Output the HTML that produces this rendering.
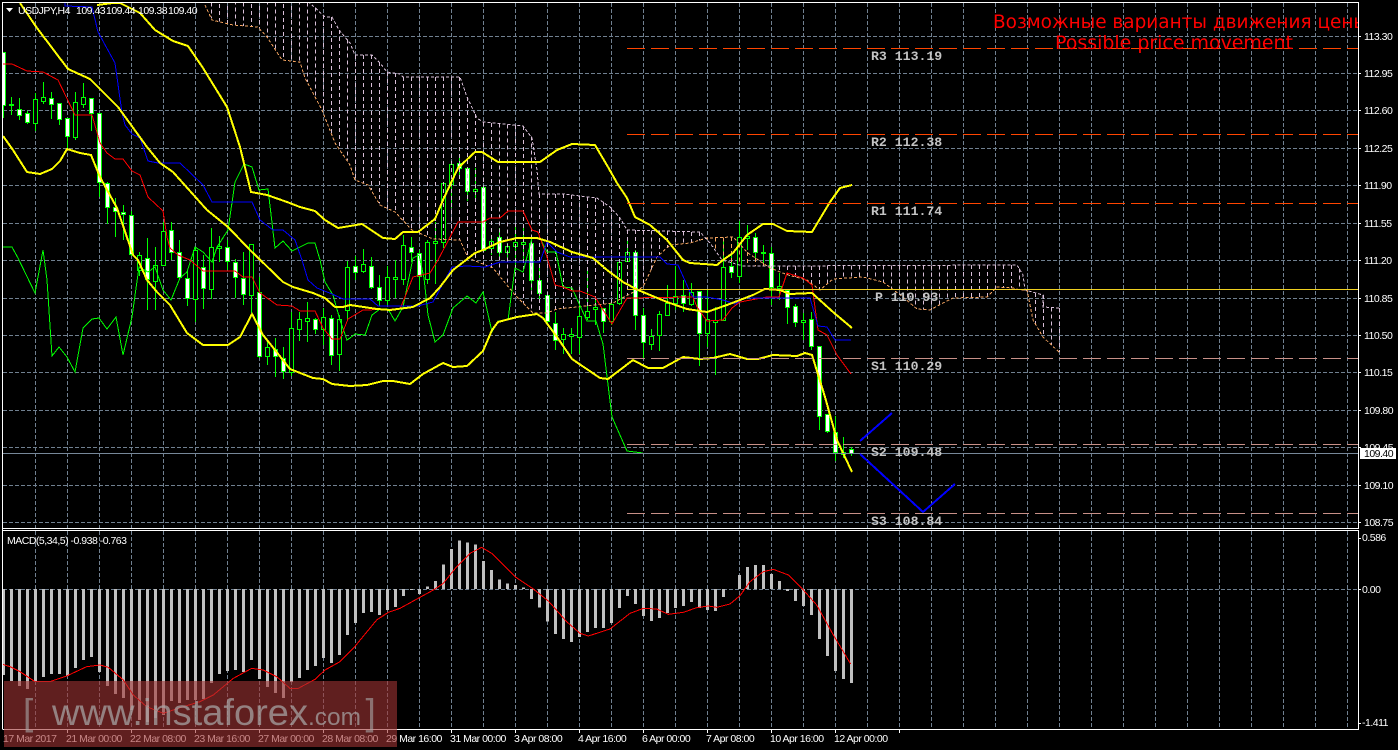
<!DOCTYPE html>
<html><head><meta charset="utf-8"><title>USDJPY,H4</title>
<style>
html,body{margin:0;padding:0;background:#000;width:1398px;height:750px;overflow:hidden}
svg{display:block;position:absolute;left:0;top:0}
text{font-family:"Liberation Sans",sans-serif;fill:#fff;font-size:10.5px;letter-spacing:-.5px}
.m{font-family:"Liberation Mono",monospace;font-size:13.2px;font-weight:bold;fill:#c4c4c4;letter-spacing:0}
.t{font-family:"DejaVu Sans",sans-serif;font-size:19px;fill:#f00;letter-spacing:0}
.l{fill:none;shape-rendering:crispEdges}
</style></head><body>
<svg id="s" width="1398" height="750" viewBox="0 0 1398 750" xmlns="http://www.w3.org/2000/svg">
<defs>
<clipPath id="c1"><rect x="3" y="3" width="1355" height="525"/></clipPath>
<clipPath id="c2"><rect x="3" y="531" width="1355" height="198"/></clipPath>
</defs>
<rect width="1398" height="750" fill="#000"/>
<g id="grid" shape-rendering="crispEdges"></g>
<g clip-path="url(#c1)" id="main"></g>
<g clip-path="url(#c2)" id="macd"></g>
<g id="frame" shape-rendering="crispEdges">
<path d="M2.5 729V2.5H1358.5V528.5H2.5M2.5 530.5H1358.5V729.5H2.5" fill="none" stroke="#fff"/>
</g>
<path d="M6 8h7l-3.5 4z" fill="#fff"/>
<text x="18" y="14">USDJPY,H4</text>
<text x="76" y="14">109.43</text><text x="106" y="14">109.44</text><text x="138" y="14">109.38</text><text x="168" y="14">109.40</text>
<text x="7" y="544">MACD(5,34,5) -0.938 -0.763</text>

<g class="m-labels">
<text class="m" x="871" y="60">R3 113.19</text>
<text class="m" x="871" y="146">R2 112.38</text>
<text class="m" x="871" y="215">R1 111.74</text>
<text class="m" x="875" y="301">P 110.93</text>
<text class="m" x="871" y="370">S1 110.29</text>
<text class="m" x="871" y="456">S2 109.48</text>
<text class="m" x="871" y="525">S3 108.84</text>
</g>

<svg x="0" y="0" width="1358" height="60" overflow="hidden">
<text class="t" x="993" y="28" textLength="375" lengthAdjust="spacingAndGlyphs">Возможные варианты движения цены</text>
<text class="t" x="1055" y="49" textLength="238" lengthAdjust="spacingAndGlyphs">Possible price movement</text>
</svg>

<g>
<text x="1364" y="40">113.30</text><text x="1364" y="77">112.95</text><text x="1364" y="114">112.60</text>
<text x="1364" y="152">112.25</text><text x="1364" y="189">111.90</text><text x="1364" y="227">111.55</text>
<text x="1364" y="264">111.20</text><text x="1364" y="302">110.85</text><text x="1364" y="339">110.50</text>
<text x="1364" y="376">110.15</text><text x="1364" y="414">109.80</text><text x="1364" y="451">109.45</text>
<text x="1364" y="489">109.10</text><text x="1364" y="526">108.75</text>
<rect x="1360" y="448" width="36" height="11" fill="#fff"/>
<text x="1364" y="457" style="fill:#000">109.40</text>
<text x="1362" y="541">0.586</text><text x="1362" y="593">0.00</text><text x="1362" y="726">-1.411</text>
</g>

<g>
<text x="3" y="742">17 Mar 2017</text><text x="66" y="742">21 Mar 00:00</text><text x="130" y="742">22 Mar 08:00</text>
<text x="194" y="742">23 Mar 16:00</text><text x="258" y="742">27 Mar 00:00</text><text x="322" y="742">28 Mar 08:00</text>
<text x="386" y="742">29 Mar 16:00</text><text x="450" y="742">31 Mar 00:00</text><text x="514" y="742">3 Apr 08:00</text>
<text x="578" y="742">4 Apr 16:00</text><text x="642" y="742">6 Apr 00:00</text><text x="706" y="742">7 Apr 08:00</text>
<text x="770" y="742">10 Apr 16:00</text><text x="834" y="742">12 Apr 00:00</text>
</g>

<rect x="4" y="681" width="393" height="66" fill="#a03434" fill-opacity=".6"/>
<g>
<text x="23" y="725" style="font-size:37px;fill:#a8a8a8;letter-spacing:0" fill-opacity=".6">[</text>
<text x="52" y="725" textLength="256" lengthAdjust="spacingAndGlyphs" style="font-size:37px;fill:#a8a8a8;letter-spacing:0" fill-opacity=".72">www.instaforex</text>
<text x="308" y="725" textLength="53" lengthAdjust="spacingAndGlyphs" style="font-size:24px;fill:#a8a8a8;letter-spacing:0" fill-opacity=".72">.com</text>
<text x="365.5" y="725" style="font-size:37px;fill:#a8a8a8;letter-spacing:0" fill-opacity=".6">]</text>
</g>
</svg>
<script>
(function(){
var NS="http://www.w3.org/2000/svg";
function el(p,n,a){var e=document.createElementNS(NS,n);for(var k in a)e.setAttribute(k,a[k]);p.appendChild(e);return e;}
var G=document.getElementById("grid"),M=document.getElementById("main"),D=document.getElementById("macd"),F=document.getElementById("frame");
var i,x,gc="#708090";
var hs=[36,73,110,148,185,223,260,298,335,372,410,447,485,522];
hs.forEach(function(y){
 el(G,"line",{x1:3,x2:1358,y1:y+.5,y2:y+.5,stroke:gc,"stroke-dasharray":"4 2"});
 el(F,"line",{x1:1358,x2:1361,y1:y+.5,y2:y+.5,stroke:"#fff"});
});
for(x=35;x<1358;x+=32){
 el(G,"line",{x1:x+.5,x2:x+.5,y1:3,y2:528,stroke:gc,"stroke-dasharray":"4 2"});
 el(G,"line",{x1:x+.5,x2:x+.5,y1:531,y2:729,stroke:gc,"stroke-dasharray":"4 2"});
}
for(x=67;x<900;x+=64){el(F,"line",{x1:x+.5,x2:x+.5,y1:729,y2:733,stroke:"#fff"});}
el(G,"line",{x1:3,x2:1358,y1:589.5,y2:589.5,stroke:gc,"stroke-dasharray":"4 2"});
[[538],[589],[723]].forEach(function(a){el(F,"line",{x1:1358,x2:1361,y1:a[0]+.5,y2:a[0]+.5,stroke:"#fff"});});

/* candles: hi, top, bottom, lo, white */
var C=[[52,52,105,118,1],[97,104,105,115,0],[98,109,115,120,1],[111,113,122,124,1],[93,99,123,131,0],[82,97,101,104,0],[92,98,104,119,1],[103,103,119,125,1],[118,118,136,148,1],[92,102,137,140,0],[83,97,104,108,0],[98,98,113,131,1],[113,113,182,197,1],[182,183,207,224,1],[198,207,211,237,1],[205,212,214,240,1],[211,215,254,256,1],[252,255,270,276,0],[238,258,279,310,1],[247,265,281,310,0],[222,231,265,266,0],[222,230,252,260,1],[240,252,277,279,1],[270,278,298,306,1],[248,250,299,322,0],[255,267,288,309,1],[228,247,289,299,0],[236,246,248,262,0],[240,247,261,270,1],[259,262,277,298,1],[252,278,294,305,1],[244,244,295,313,0],[277,292,356,358,1],[340,347,356,365,0],[338,349,356,377,1],[347,358,371,379,1],[312,328,372,376,0],[312,319,329,341,0],[302,318,321,342,0],[318,319,329,334,1],[308,317,329,345,0],[315,318,355,365,1],[315,319,354,371,0],[261,267,310,320,0],[256,266,272,280,1],[249,264,271,273,0],[257,266,287,289,1],[275,287,300,306,1],[266,277,300,305,0],[260,277,279,298,0],[235,245,279,285,0],[237,247,252,262,1],[250,253,276,290,1],[240,242,279,284,0],[222,241,243,284,0],[183,183,242,248,0],[164,164,184,208,0],[156,163,168,175,1],[168,168,191,201,1],[168,189,191,201,0],[185,187,250,252,1],[236,241,248,255,0],[228,237,252,258,1],[243,246,252,262,0],[224,242,246,268,0],[228,242,244,262,0],[239,243,280,290,1],[268,280,293,300,1],[295,295,321,325,1],[312,323,340,350,1],[328,334,339,354,0],[328,334,336,354,0],[302,316,337,354,0],[268,311,317,320,0],[298,307,309,325,0],[308,308,321,333,1],[300,304,321,325,0],[260,262,303,305,0],[240,252,261,262,0],[250,252,315,330,1],[308,315,342,358,1],[329,336,344,350,0],[311,314,335,351,0],[285,303,315,316,0],[266,296,303,310,0],[280,295,303,312,1],[283,292,304,306,0],[291,291,333,366,1],[290,319,333,347,0],[307,320,322,375,0],[240,267,320,321,0],[255,266,272,278,1],[221,237,276,283,0],[225,236,238,250,0],[233,237,252,258,1],[245,252,253,263,0],[247,253,287,305,1],[273,286,288,300,0],[290,290,307,324,1],[304,306,322,327,1],[313,320,322,340,0],[312,319,346,350,1],[346,346,416,430,1],[414,414,431,433,1],[416,432,452,461,1],[437,452,454,458,1],[447,449,453,456,1]];
var cg=el(M,"g",{"shape-rendering":"crispEdges"});
C.forEach(function(c,k){
 var cx=3+8*k;
 el(cg,"line",{x1:cx+.5,x2:cx+.5,y1:c[0],y2:c[3],stroke:"#00ff00"});
 el(cg,"rect",{x:cx-1.5,y:c[1]+.5,width:4,height:Math.max(c[2]-c[1],1),fill:c[4]?"#fff":"#000",stroke:"#00ff00"});
});

function yAt(p,x){
 if(x<=p[0][0])return p[0][1];
 for(var i=1;i<p.length;i++){if(x<=p[i][0]){var a=p[i-1],b=p[i];return a[1]+(b[1]-a[1])*(x-a[0])/(b[0]-a[0]);}}
 return p[p.length-1][1];
}
var orange=[[205,5],[212,20],[233,25],[258,27],[267,37],[282,60],[300,62],[305,78],[322,110],[335,143],[350,165],[355,180],[368,185],[380,205],[395,212],[412,230],[433,239],[460,240],[468,258],[493,268],[515,295],[533,313],[547,313],[557,309],[577,307],[613,303],[643,287],[657,257],[670,245],[690,243],[707,238],[733,237],[748,253],[770,268],[788,275],[807,280],[820,290],[833,279],[863,277],[883,282],[903,297],[917,309],[930,310],[943,303],[953,298],[987,297],[997,287],[1013,288],[1020,290],[1027,290],[1033,320],[1043,337],[1059,352]];
var thistle=[[205,-20],[310,3],[325,17],[332,17],[339,30],[350,43],[355,55],[372,55],[380,63],[387,72],[400,74],[403,77],[460,77],[467,97],[477,118],[483,122],[523,126],[532,138],[537,170],[539,194],[563,194],[597,198],[610,207],[620,218],[627,230],[700,232],[710,243],[722,260],[743,266],[763,266],[1017,265],[1023,275],[1025,290],[1043,295],[1043,307],[1059,308]];
function pl(p,o){o=o||{};o.points=p.map(function(a){return a.join(",")}).join(" ");o["class"]="l";return el(M,"polyline",o);}
var hg=el(M,"g",{"shape-rendering":"crispEdges"});
for(x=211;x<=1059;x+=8){
 var a=yAt(orange,x),b=yAt(thistle,x);
 el(hg,"line",{x1:x+.5,x2:x+.5,y1:Math.min(a,b),y2:Math.max(a,b),stroke:a<b?"#f4a460":"#d8bfd8","stroke-dasharray":"4 3"});
}
pl(orange,{stroke:"#f4a460","stroke-dasharray":"3 2"});
pl(thistle,{stroke:"#d8bfd8","stroke-dasharray":"3 2"});

/* chikou */
pl([[3,247],[12,247],[18,258],[35,293],[43,250],[47,280],[52,356],[59,347],[67,357],[75,372],[83,328],[92,319],[99,318],[107,329],[116,317],[123,355],[132,317],[139,267],[148,272],[155,267],[163,290],[171,300],[180,278],[187,272],[195,247],[203,252],[212,262],[217,247],[228,230],[235,182],[244,164],[252,167],[259,190],[268,189],[275,248],[283,241],[292,251],[308,243],[315,243],[320,260],[325,282],[333,295],[340,320],[347,340],[350,338],[355,334],[365,335],[372,315],[380,309],[388,309],[395,321],[403,307],[413,258],[419,255],[424,278],[428,315],[435,342],[443,335],[453,308],[467,296],[476,303],[483,292],[492,332],[498,321],[508,320],[515,268],[523,272],[532,238],[540,238],[547,252],[556,252],[563,287],[572,288],[587,321],[596,321],[603,344],[612,417],[627,451],[643,453]],{stroke:"#00ff00"});
/* tenkan */
pl([[3,64],[12,64],[27,71],[43,72],[58,80],[75,115],[92,115],[100,143],[107,153],[115,159],[123,159],[132,171],[140,175],[148,197],[163,211],[167,237],[170,248],[178,255],[190,260],[203,271],[235,271],[243,277],[252,277],[260,293],[277,305],[292,306],[300,311],[315,311],[323,328],[332,339],[340,339],[348,319],[363,310],[400,309],[407,292],[413,277],[430,273],[438,260],[458,222],[483,222],[490,218],[500,218],[508,211],[523,211],[532,230],[538,232],[547,257],[555,285],[563,287],[572,291],[580,291],[595,297],[612,324],[627,298],[693,297],[697,307],[707,321],[723,320],[732,308],[740,302],[767,297],[779,297],[787,273],[803,278],[812,285],[818,330],[827,335],[837,355],[851,374]],{stroke:"#ff0000"});
/* kijun */
pl([[65,3],[65,6],[92,7],[98,32],[115,63],[122,113],[125,125],[132,134],[140,138],[148,161],[158,163],[180,163],[203,185],[212,202],[252,202],[260,220],[273,230],[283,230],[295,240],[302,260],[308,280],[317,288],[332,294],[343,299],[370,299],[378,306],[418,306],[433,302],[452,267],[467,266],[485,267],[500,262],[540,262],[547,242],[557,252],[570,257],[660,257],[667,264],[678,265],[690,292],[693,297],[707,297],[723,300],[735,304],[745,298],[810,298],[818,326],[827,327],[835,340],[851,340]],{stroke:"#0000ff"});
/* yellow bands */
var Y=[
[[97,5],[113,3],[120,3],[140,13],[155,30],[173,41],[188,46],[203,68],[227,107],[240,147],[251,192],[267,195],[287,202],[300,207],[315,211],[325,220],[338,228],[350,226],[362,224],[383,238],[395,239],[403,232],[418,232],[435,219],[443,200],[458,168],[475,152],[482,152],[498,162],[540,162],[557,150],[572,144],[595,145],[608,167],[617,183],[627,198],[635,217],[650,225],[667,240],[683,260],[690,263],[717,265],[723,260],[733,253],[747,235],[763,224],[773,224],[787,231],[812,232],[830,202],[840,188],[852,185]],
[[20,3],[37,28],[68,69],[90,79],[118,107],[147,147],[160,163],[173,172],[207,210],[228,227],[250,250],[283,282],[293,287],[313,293],[325,298],[335,307],[343,307],[350,305],[377,309],[390,310],[413,307],[430,298],[440,287],[453,270],[475,253],[483,250],[500,242],[517,238],[537,238],[550,242],[572,252],[593,258],[607,270],[623,282],[638,290],[667,302],[687,309],[707,312],[727,305],[753,295],[765,289],[780,290],[790,294],[812,293],[833,312],[852,328]],
[[3,136],[13,150],[27,172],[40,174],[52,169],[60,161],[67,149],[80,153],[91,155],[100,177],[117,208],[133,255],[138,260],[147,280],[157,292],[170,305],[187,333],[203,345],[228,345],[240,337],[252,314],[263,335],[275,350],[290,369],[313,378],[323,379],[332,384],[350,386],[367,385],[383,381],[393,381],[410,384],[423,374],[443,363],[453,367],[467,366],[483,351],[492,330],[498,322],[517,317],[537,314],[543,318],[557,337],[572,359],[600,378],[608,379],[633,360],[648,368],[663,368],[683,357],[700,359],[713,358],[730,354],[747,359],[758,359],[773,355],[797,356],[805,353],[812,355],[825,397],[837,440],[852,472]]];
Y.forEach(function(p){pl(p,{stroke:"#ffff00","stroke-width":2});});

/* pivots */
var pg=el(M,"g",{"shape-rendering":"crispEdges"});
[[48,"#ff4500"],[134,"#ff4500"],[203,"#ff4500"],[358,"#c89088"],[444,"#c89088"],[513,"#c89088"]].forEach(function(a){
 el(pg,"line",{x1:627,x2:1358,y1:a[0]+.5,y2:a[0]+.5,stroke:a[1],"stroke-dasharray":"18 6"});
});
el(pg,"line",{x1:627,x2:1358,y1:289.5,y2:289.5,stroke:"#f0d020"});
el(pg,"line",{x1:3,x2:1358,y1:453.5,y2:453.5,stroke:"#778899"});
/* forecast */
pl([[860,441],[892,413]],{stroke:"#0000ff","stroke-width":2});
pl([[860,454],[923,512],[955,484]],{stroke:"#0000ff","stroke-width":2});

/* MACD bars */
var H=[675,681,686,689,682,677,674,674,676,668,660,657,672,686,694,698,710,720,722,718,715,701,703,700,700,699,683,674,671,670,672,660,679,687,693,698,682,678,670,666,658,663,655,635,623,613,612,615,610,607,596,590,594];
var H2=[184,168,118,72,46,52,58,108,135,163,175,180,187,222,248,290,327,342,351,336,321,309,309,294,249,213,237,273,288,279,264,249,243,231,249,255,258,216,193,150,126,120,120,147,168,198,228,243,270,342,393,438,462,474];
H2.forEach(function(v){H.push(525+v/3);});
var bg=el(D,"g",{"shape-rendering":"crispEdges"});
H.forEach(function(v,k){
 var cx=3+8*k,t=Math.min(v,589),b=Math.max(v,589);
 if(b-t>=.5)el(bg,"rect",{x:cx-1,y:t,width:3,height:b-t,fill:"#c0c0c0"});
});
var sig=[[8,418],[30,425],[60,440],[105,470],[150,470],[200,453],[260,425],[300,420],[325,427],[370,465],[400,510],[440,545],[490,565],[550,545],[600,530],[640,510],[700,460],[755,430],[790,435],[830,455],[870,490],[895,490],[945,463],[975,435],[1020,410],[1060,370],[1130,285],[1165,262],[1200,250],[1260,217]].map(function(a){return [a[0]/3,525+a[1]/3];});
[[0,217],[40,195],[70,175],[110,125],[150,85],[185,67],[215,85],[285,155],[340,192],[385,228],[440,290],[480,325],[505,333],[570,312],[630,265],[670,250],[710,252],[745,268],[790,262],[830,248],[865,243],[890,247],[930,237],[960,212],[990,170],[1030,140],[1060,133],[1105,150],[1150,195],[1190,240],[1240,330],[1292,417]].forEach(function(a){sig.push([420+a[0]/3,525+a[1]/3]);});
el(D,"polyline",{points:sig.map(function(a){return a.join(",")}).join(" "),fill:"none",stroke:"#ff0000","shape-rendering":"crispEdges"});
})();
</script>
</body></html>
